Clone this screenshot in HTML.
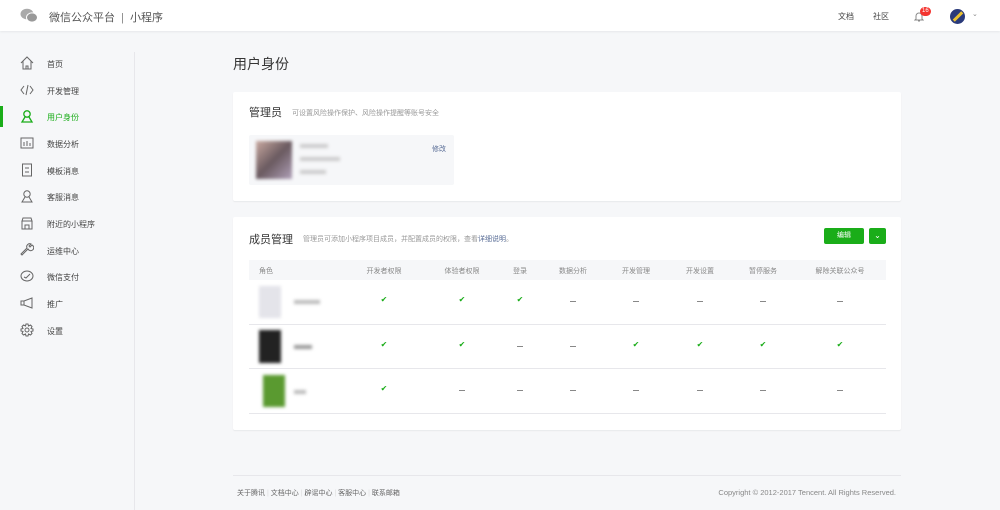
<!DOCTYPE html>
<html><head><meta charset="utf-8"><style>
*{margin:0;padding:0;box-sizing:border-box}
body{width:1000px;height:510px;overflow:hidden;background:#f6f7f9;font-family:"Liberation Sans","Noto Sans CJK SC",sans-serif;color:#353535;position:relative}
.a{position:absolute}
.hd{left:0;top:0;width:1000px;height:31px;background:#fff;box-shadow:0 1px 2px #e6e8ea}
.nav{left:20px;font-size:8px;color:#444}
.nav svg{position:absolute;left:0;top:-3px}
.nav span{position:absolute;left:27px;top:0;white-space:nowrap}
.card{background:#fff;border-radius:2px;box-shadow:0 1px 1px #e8e9eb}
.th{font-size:7px;color:#888;top:266px;transform:translateX(-50%);white-space:nowrap}
.ck{color:#1aad19;font-size:8px;transform:translateX(-50%)}
.ds{width:6px;height:1px;background:#888;transform:translateX(-50%)}
.blur{filter:blur(1.5px)}
</style></head><body>
<div class="a hd"></div>
<svg class="a" style="left:20px;top:8px" width="18" height="15" viewBox="0 0 18 15"><ellipse cx="7" cy="6" rx="6.5" ry="5.3" fill="#aaa"/><ellipse cx="12" cy="9.5" rx="5.5" ry="4.6" fill="#999" stroke="#fff" stroke-width="1"/></svg>
<div class="a" style="left:49px;top:9px;font-size:11px;color:#555;white-space:nowrap">微信公众平台 <span style="color:#888;margin:0 3px">|</span> 小程序</div>
<div class="a" style="left:838px;top:11px;font-size:8px;color:#444">文档</div>
<div class="a" style="left:873px;top:11px;font-size:8px;color:#444">社区</div>
<svg class="a" style="left:914px;top:11px" width="10" height="11" viewBox="0 0 10 11"><path d="M2 8V5a3 3 0 016 0v3l1 1H1z M4 10h2" fill="none" stroke="#888" stroke-width="1"/></svg>
<div class="a" style="left:920px;top:7px;background:#f43530;color:#fff;font-size:6px;border-radius:5px;padding:1px 2px;line-height:7px">16</div>
<div class="a" style="left:950px;top:9px;width:15px;height:15px;border-radius:50%;background:#2a3a7a;overflow:hidden"><div style="position:absolute;left:2px;top:6px;width:12px;height:3px;background:#e8c030;transform:rotate(-45deg)"></div></div>
<div class="a" style="left:972px;top:10px;font-size:7px;color:#888">⌄</div>

<div class="a" style="left:134px;top:52px;width:1px;height:458px;background:#e7e7eb"></div>
<div class="a" style="left:0;top:106px;width:3px;height:21px;background:#1aad19"></div>
<div class="a nav" style="top:59px"><svg width="14" height="14" viewBox="0 0 14 14" fill="none" stroke="#666"><path d="M1 7L7 1l6 6M3 5v8h8V5M6 13v-3h2v3"/></svg><span>首页</span></div>
<div class="a nav" style="top:86px"><svg width="14" height="14" viewBox="0 0 14 14" fill="none" stroke="#666"><path d="M4 3L1 7l3 4M10 3l3 4-3 4M8 2L6 12"/></svg><span>开发管理</span></div>
<div class="a nav" style="top:112px;color:#1aad19"><svg width="14" height="14" viewBox="0 0 14 14" fill="none" stroke="#1aad19" stroke-width="1.3"><circle cx="7" cy="5" r="3.2"/><path d="M5 8L2 13h10L9 8"/></svg><span>用户身份</span></div>
<div class="a nav" style="top:139px"><svg width="14" height="14" viewBox="0 0 14 14" fill="none" stroke="#666"><rect x="1" y="2" width="12" height="10"/><path d="M4 10V6M7 10V5M10 10V7"/></svg><span>数据分析</span></div>
<div class="a nav" style="top:166px"><svg width="14" height="14" viewBox="0 0 14 14" fill="none" stroke="#666"><rect x="2.5" y="1" width="9" height="12"/><path d="M5 5h4M5 9h4"/></svg><span>模板消息</span></div>
<div class="a nav" style="top:192px"><svg width="14" height="14" viewBox="0 0 14 14" fill="none" stroke="#666"><circle cx="7" cy="5" r="3.2"/><path d="M5 8L2 13h10L9 8"/></svg><span>客服消息</span></div>
<div class="a nav" style="top:219px"><svg width="14" height="14" viewBox="0 0 14 14" fill="none" stroke="#666"><path d="M2 5l1-3h8l1 3zM2 5v8h10V5M5 13V9h4v4"/></svg><span>附近的小程序</span></div>
<div class="a nav" style="top:246px"><svg width="14" height="14" viewBox="0 0 14 14" fill="none" stroke="#666"><path d="M2 12l6-6a3 3 0 104-4l-2 2-1-1 2-2a3 3 0 00-4 4l-6 6z"/></svg><span>运维中心</span></div>
<div class="a nav" style="top:272px"><svg width="14" height="14" viewBox="0 0 14 14" fill="none" stroke="#666"><ellipse cx="7" cy="7" rx="6" ry="5"/><path d="M4 8l2 1 4-4"/></svg><span>微信支付</span></div>
<div class="a nav" style="top:299px"><svg width="14" height="14" viewBox="0 0 14 14" fill="none" stroke="#666"><path d="M1 5h3l8-3v10L4 9H1zM4 5v4"/></svg><span>推广</span></div>
<div class="a nav" style="top:326px"><svg width="14" height="14" viewBox="0 0 14 14" fill="none" stroke="#666"><circle cx="7" cy="7" r="2"/><path d="M6 1h2l.5 2 2-1 1.5 1.5-1 2 2 .5v2l-2 .5 1 2-1.5 1.5-2-1L8 13H6l-.5-2-2 1L2 10.5l1-2L1 8V6l2-.5-1-2L3.5 2l2 1z"/></svg><span>设置</span></div>

<div class="a" style="left:233px;top:54px;font-size:14px;color:#353535">用户身份</div>

<div class="a card" style="left:233px;top:92px;width:668px;height:109px"></div>
<div class="a" style="left:249px;top:104px;font-size:11px">管理员</div>
<div class="a" style="left:292px;top:108px;font-size:7px;color:#999">可设置风险操作保护、风险操作提醒等账号安全</div>
<div class="a" style="left:249px;top:135px;width:205px;height:50px;background:#f6f7f9;border-radius:2px"></div>
<div class="a blur" style="left:256px;top:141px;width:36px;height:38px;background:linear-gradient(135deg,#c9a9a0,#6a5a60,#b0a0b8)"></div>
<div class="a blur" style="left:300px;top:144px;width:28px;height:4px;background:#ccc"></div>
<div class="a blur" style="left:300px;top:157px;width:40px;height:4px;background:#ccc"></div>
<div class="a blur" style="left:300px;top:170px;width:26px;height:4px;background:#ccc"></div>
<div class="a" style="left:432px;top:144px;font-size:7px;color:#576b95">修改</div>

<div class="a card" style="left:233px;top:217px;width:668px;height:213px"></div>
<div class="a" style="left:249px;top:231px;font-size:11px">成员管理</div>
<div class="a" style="left:303px;top:234px;font-size:7px;color:#999">管理员可添加小程序项目成员，并配置成员的权限，查看<span style="color:#576b95">详细说明</span>。</div>
<div class="a" style="left:824px;top:228px;width:40px;height:16px;background:#1aad19;border-radius:2px;color:#fff;font-size:7px;text-align:center;line-height:16px">编辑</div>
<div class="a" style="left:869px;top:228px;width:17px;height:16px;background:#1aad19;border-radius:2px;color:#fff;font-size:8px;text-align:center;line-height:15px">⌄</div>
<div class="a" style="left:249px;top:260px;width:637px;height:20px;background:#f6f7f9"></div>
<div class="a th" style="left:266px">角色</div>
<div class="a th" style="left:384px">开发者权限</div>
<div class="a th" style="left:462px">体验者权限</div>
<div class="a th" style="left:520px">登录</div>
<div class="a th" style="left:573px">数据分析</div>
<div class="a th" style="left:636px">开发管理</div>
<div class="a th" style="left:700px">开发设置</div>
<div class="a th" style="left:763px">暂停服务</div>
<div class="a th" style="left:840px">解除关联公众号</div>
<div class="a" style="left:249px;top:324px;width:637px;height:1px;background:#e7e7eb"></div>
<div class="a" style="left:249px;top:368px;width:637px;height:1px;background:#e7e7eb"></div>
<div class="a" style="left:249px;top:413px;width:637px;height:1px;background:#e7e7eb"></div>
<div class="a blur" style="left:259px;top:286px;width:22px;height:32px;background:#e4e4ea"></div>
<div class="a blur" style="left:294px;top:300px;width:26px;height:4px;background:#bbb"></div>
<div class="a blur" style="left:259px;top:330px;width:22px;height:33px;background:#222"></div>
<div class="a blur" style="left:294px;top:345px;width:18px;height:4px;background:#999"></div>
<div class="a blur" style="left:263px;top:375px;width:22px;height:32px;background:#5a9a30"></div>
<div class="a blur" style="left:294px;top:390px;width:12px;height:4px;background:#bbb"></div>

<div class="a ck" style="left:384px;top:295px">✔</div><div class="a ck" style="left:462px;top:295px">✔</div><div class="a ck" style="left:520px;top:295px">✔</div>
<div class="a ds" style="left:573px;top:301px"></div><div class="a ds" style="left:636px;top:301px"></div><div class="a ds" style="left:700px;top:301px"></div><div class="a ds" style="left:763px;top:301px"></div><div class="a ds" style="left:840px;top:301px"></div>
<div class="a ck" style="left:384px;top:340px">✔</div><div class="a ck" style="left:462px;top:340px">✔</div><div class="a ds" style="left:520px;top:346px"></div><div class="a ds" style="left:573px;top:346px"></div>
<div class="a ck" style="left:636px;top:340px">✔</div><div class="a ck" style="left:700px;top:340px">✔</div><div class="a ck" style="left:763px;top:340px">✔</div><div class="a ck" style="left:840px;top:340px">✔</div>
<div class="a ck" style="left:384px;top:384px">✔</div>
<div class="a ds" style="left:462px;top:390px"></div><div class="a ds" style="left:520px;top:390px"></div><div class="a ds" style="left:573px;top:390px"></div><div class="a ds" style="left:636px;top:390px"></div><div class="a ds" style="left:700px;top:390px"></div><div class="a ds" style="left:763px;top:390px"></div><div class="a ds" style="left:840px;top:390px"></div>

<div class="a" style="left:233px;top:475px;width:668px;height:1px;background:#e7e7eb"></div>
<div class="a" style="left:237px;top:488px;font-size:7px;color:#666;white-space:nowrap">关于腾讯 <span style="color:#ddd">|</span> 文档中心 <span style="color:#ddd">|</span> 辟谣中心 <span style="color:#ddd">|</span> 客服中心 <span style="color:#ddd">|</span> 联系邮箱</div>
<div class="a" style="right:104px;top:488px;font-size:7.5px;color:#888;white-space:nowrap">Copyright © 2012-2017 Tencent. All Rights Reserved.</div>
</body></html>
